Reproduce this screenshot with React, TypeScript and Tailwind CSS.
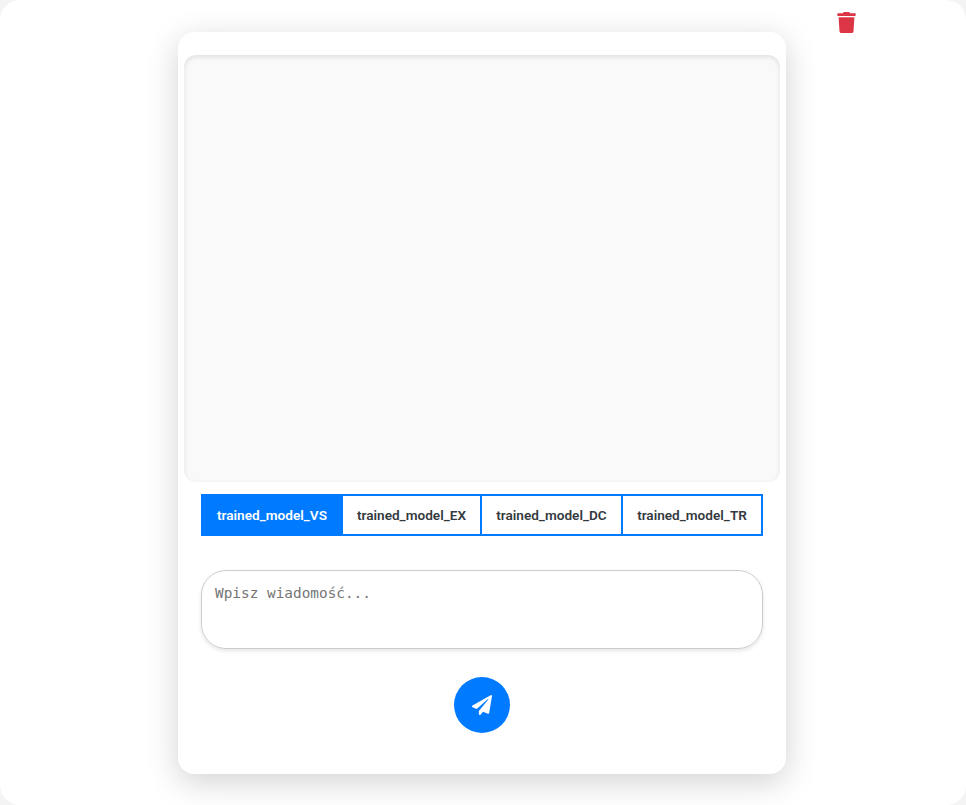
import React, { useState } from "react";
import { FaPaperPlane, FaTrash } from "react-icons/fa";

const models = [
  { name: "trained_model_VS", width: "w-[142px]" },
  { name: "trained_model_EX", width: "w-[139px]" },
  { name: "trained_model_DC", width: "w-[141px]" },
  { name: "trained_model_TR", width: "w-[140px]" },
];

const App: React.FC = () => {
  const [active, setActive] = useState<string>("trained_model_VS");

  return (
    <div className="h-[805px] w-full overflow-hidden bg-[#f4f4f4] font-['Roboto',sans-serif]">
      <div className="relative flex h-full justify-center rounded-[20px] bg-white pt-8 pr-[2px]">
        <button className="absolute left-[836px] top-[12px] text-[21px] text-[#dc3545]">
          <FaTrash />
        </button>

        <div className="flex h-[742px] w-[608px] flex-col rounded-[16px] bg-white px-[6px] pt-[23px] shadow-[0_8px_32px_rgba(0,0,0,0.18)]">
          <div className="h-[427px] rounded-[12px] bg-[#f9f9f9] shadow-[inset_0_2px_5px_rgba(0,0,0,0.1)]" />

          <div className="mx-[17px] mt-[12px] flex h-[42px]">
            {models.map((model, i) => (
              <button
                key={model.name}
                onClick={() => setActive(model.name)}
                className={`${model.width} border-y-2 border-r-2 border-[#007bff] text-[13.6px] font-semibold ${
                  i === 0 ? "border-l-2" : ""
                } ${
                  active === model.name
                    ? "bg-[#007bff] text-white"
                    : "bg-white text-[#343a40]"
                }`}
              >
                {model.name}
              </button>
            ))}
          </div>

          <textarea
            placeholder="Wpisz wiadomość..."
            className="mx-[17px] mt-[34px] h-[79px] resize-none rounded-[25px] border border-[#cccccc] px-[13px] py-[14px] font-['DejaVu_Sans_Mono',monospace] text-[14.4px] leading-[17px] shadow-[0_2px_4px_rgba(0,0,0,0.1)] outline-none placeholder:text-[#757575]"
          />

          <div className="mt-[28px] flex justify-center">
            <button className="flex h-14 w-14 items-center justify-center rounded-full bg-[#007bff] text-[20px] text-white">
              <FaPaperPlane />
            </button>
          </div>
        </div>
      </div>
    </div>
  );
};

export default App;
